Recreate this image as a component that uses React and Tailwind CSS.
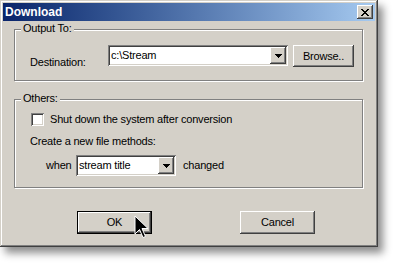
const raised =
  "shadow-[inset_-1px_-1px_0_#404040,inset_1px_1px_0_#ffffff,inset_-2px_-2px_0_#808080,inset_2px_2px_0_#D4D0C8]";
const sunken =
  "shadow-[inset_1px_1px_0_#808080,inset_-1px_-1px_0_#ffffff,inset_2px_2px_0_#404040,inset_-2px_-2px_0_#D4D0C8]";

function DropArrow() {
  return (
    <svg width="7" height="4" viewBox="0 0 7 4" shapeRendering="crispEdges">
      <rect x="0" y="0" width="7" height="1" fill="#000" />
      <rect x="1" y="1" width="5" height="1" fill="#000" />
      <rect x="2" y="2" width="3" height="1" fill="#000" />
      <rect x="3" y="3" width="1" height="1" fill="#000" />
    </svg>
  );
}

function Combo({ value, width }) {
  return (
    <div
      className={`flex h-[21px] bg-white p-[2px] ${sunken} ${width}`}
    >
      <div className="flex flex-1 items-center pl-[1px] leading-[13px]">{value}</div>
      <div
        className={`flex h-[17px] w-[16px] items-center justify-center bg-[#D4D0C8] ${raised}`}
      >
        <DropArrow />
      </div>
    </div>
  );
}

function CloseGlyph() {
  const px = [
    [0, 0], [1, 0], [6, 0], [7, 0],
    [1, 1], [2, 1], [5, 1], [6, 1],
    [2, 2], [3, 2], [4, 2], [5, 2],
    [3, 3], [4, 3],
    [2, 4], [3, 4], [4, 4], [5, 4],
    [1, 5], [2, 5], [5, 5], [6, 5],
    [0, 6], [1, 6], [6, 6], [7, 6],
  ];
  return (
    <svg width="8" height="7" viewBox="0 0 8 7" shapeRendering="crispEdges">
      {px.map(([x, y]) => (
        <rect key={`${x}-${y}`} x={x} y={y} width="1" height="1" fill="#000" />
      ))}
    </svg>
  );
}

export default function App() {
  return (
    <div
      className="relative h-[264px] w-[394px] overflow-hidden bg-white text-[11px] tracking-[-0.2px] text-black"
      style={{ fontFamily: '"Liberation Sans", Arial, sans-serif' }}
    >
      <div className="flex h-[247px] w-[378px] flex-col bg-[#D4D0C8] p-[3px] shadow-[inset_-1px_-1px_0_#404040,inset_1px_1px_0_#D4D0C8,inset_-2px_-2px_0_#808080,inset_2px_2px_0_#ffffff,5px_6px_8px_rgba(0,0,0,0.45)]">
        {/* Title bar */}
        <div className="flex h-[18px] items-center justify-between bg-linear-to-r from-[#0A246A] to-[#A6CAF0] pl-[2px] pr-[2px]">
          <span className="text-[12px] font-bold leading-[14px] tracking-normal text-white">Download</span>
          <div
            className={`flex h-[14px] w-[16px] items-center justify-center bg-[#D4D0C8] ${raised}`}
          >
            <CloseGlyph />
          </div>
        </div>

        <div className="flex flex-col pl-[11px]">
          {/* Output To group */}
          <div className="relative mt-[8px] flex h-[52px] w-[349px] items-start border border-[#808080] pl-[15px] pt-[15px] shadow-[1px_1px_0_#ffffff,inset_1px_1px_0_#ffffff]">
            <span className="absolute -top-[8px] left-[6px] bg-[#D4D0C8] px-[2px] leading-[13px]">
              Output To:
            </span>
            <span className="w-[78px] self-center pb-[1px] leading-[13px]">Destination:</span>
            <Combo value="c:\Stream" width="w-[180px]" />
            <div
              className={`ml-[5px] flex h-[22px] w-[61px] items-center justify-center bg-[#D4D0C8] leading-[13px] ${raised}`}
            >
              Browse..
            </div>
          </div>

          {/* Others group */}
          <div className="relative mt-[18px] flex h-[89px] w-[349px] flex-col border border-[#808080] pl-[15px] pt-[13px] shadow-[1px_1px_0_#ffffff,inset_1px_1px_0_#ffffff]">
            <span className="absolute -top-[8px] left-[6px] bg-[#D4D0C8] px-[2px] leading-[13px]">
              Others:
            </span>
            <div className="flex items-center">
              <div className={`ml-[1px] h-[13px] w-[13px] bg-white ${sunken}`} />
              <span className="ml-[6px] leading-[13px]">
                Shut down the system after conversion
              </span>
            </div>
            <div className="mt-[9px] leading-[13px]">Create a new file methods:</div>
            <div className="mt-[7px] flex items-center">
              <span className="ml-[16px] w-[30px] leading-[13px]">when</span>
              <Combo value="stream title" width="w-[100px]" />
              <span className="ml-[7px] leading-[13px]">changed</span>
            </div>
          </div>

          {/* Buttons */}
          <div className="mt-[23px] flex pl-[63px]">
            <div className="h-[23px] w-[75px] border border-black">
              <div
                className={`flex h-full w-full items-center justify-center bg-[#D4D0C8] leading-[13px] ${raised}`}
              >
                OK
              </div>
            </div>
            <div
              className={`ml-[88px] flex h-[23px] w-[75px] items-center justify-center bg-[#D4D0C8] leading-[13px] ${raised}`}
            >
              Cancel
            </div>
          </div>
        </div>
      </div>

      {/* Mouse cursor */}
      <svg
        className="absolute left-[134px] top-[215px]"
        width="15"
        height="25"
        viewBox="0 0 15 25"
      >
        <path
          d="M1 1 L1 19 L5.5 14.5 L9 22.5 L11.5 21.5 L8 13.5 L14 13.5 Z"
          fill="#000"
          stroke="#fff"
          strokeWidth="1"
          strokeLinejoin="miter"
        />
      </svg>
    </div>
  );
}
